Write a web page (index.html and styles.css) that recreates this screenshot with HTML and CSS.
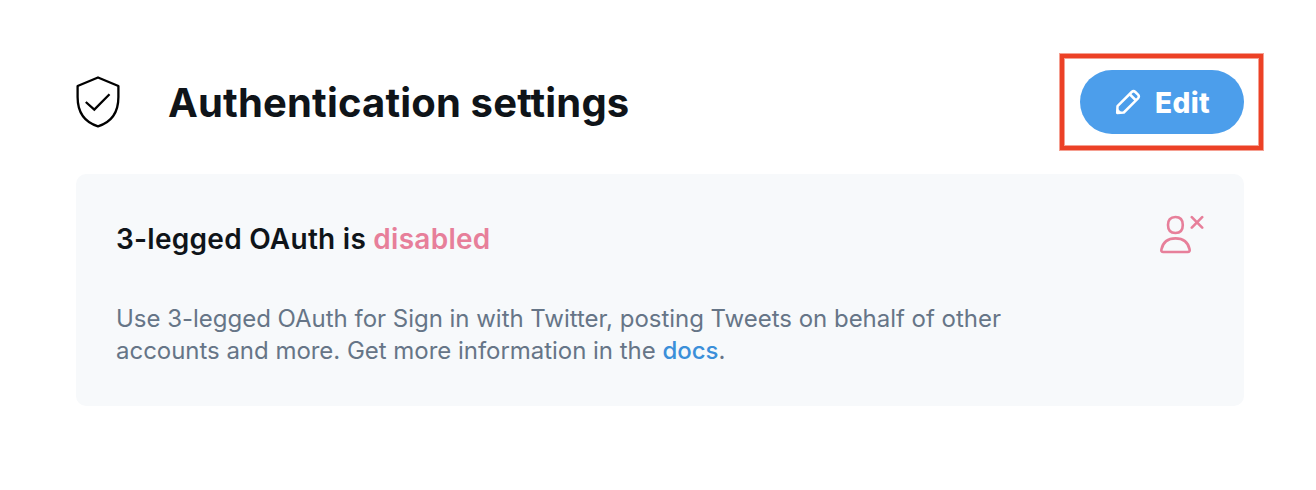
FILE: index.html
```html
<!DOCTYPE html>
<html lang="en">
<head>
<meta charset="utf-8">
<title>Authentication settings</title>
<link rel="stylesheet" href="styles.css">
</head>
<body>
<main class="page">
  <header class="header">
    <svg class="shield" viewBox="0 0 44 54" fill="none" stroke="#000" stroke-width="2.3" stroke-linejoin="round">
      <path d="M22 2.500 L42.400 11 V22 C42.400 38 34.500 47.500 22 51.300 C9.500 47.500 1.600 38 1.600 22 V11 Z"/>
      <path d="M9.800 27 L18.300 34.600 L33.500 19.300" stroke-linejoin="miter"/>
    </svg>
    <h1 class="title">Authentication settings</h1>
    <div class="highlight">
      <button class="edit" type="button">
        <svg class="pencil" viewBox="0 0 26 26" fill="none" stroke="#fff" stroke-width="2.5" stroke-linejoin="round">
          <path d="M2.200 24 L2.500 17.200 L16.700 3 Q18.500 1.300 20.300 3 L23 5.700 Q24.700 7.500 23 9.300 L8.800 23.500 Z"/>
          <path d="M15 5.500 L20.500 11"/>
          <path d="M2.500 20 L6 23.500 L2.200 24 Z" fill="#fff" stroke-width="1"/>
        </svg>
        <span class="edit-label">Edit</span>
      </button>
    </div>
  </header>
  <section class="card">
    <div class="card-head">
      <h2 class="card-title">3-legged OAuth is <span class="disabled">disabled</span></h2>
      <svg class="user" viewBox="0 0 46 40" fill="none" stroke="#e77f9a" stroke-width="2.6" stroke-linecap="round" stroke-linejoin="round">
        <path d="M17.400 3 C22.500 3 24.800 6.200 24.800 11 C24.800 16.500 22.800 19 17.400 19 C12 19 10 16.500 10 11 C10 6.200 12.300 3 17.400 3 Z"/>
        <path d="M5.300 38 H29.700 Q32.200 38 31.600 35.400 C30 28 24.500 24.400 17.500 24.400 C10.500 24.400 5 28 3.400 35.400 Q2.800 38 5.300 38 Z"/>
        <path d="M33.800 3.200 L44.200 13.700 M44.200 3.200 L33.800 13.700"/>
      </svg>
    </div>
    <p class="copy"><span class="line">Use 3-legged OAuth for Sign in with Twitter, posting Tweets on behalf of other</span> <span class="line second">accounts and more. Get more information in the <a class="docs">docs</a>.</span></p>
  </section>
</main>
</body>
</html>
```
FILE: styles.css
```css
body { margin: 0; background: #fff; font-family: Inter, sans-serif; color: #0f1419; }
.page { padding: 54px 53px 0 76px; }
.header { display: flex; height: 96px; }
.shield { width: 44px; height: 54px; margin-top: 21px; }
.title { margin: 24px 0 0 48px; font-size: 40px; line-height: 50px; font-weight: 700; letter-spacing: 0.16px; white-space: nowrap; }
.highlight { box-sizing: border-box; width: 203px; height: 96px; margin-left: auto; border: 4px solid #ec4126; box-shadow: 0 0 0 1px rgba(236, 65, 38, 0.5), inset 0 0 0 1px rgba(236, 65, 38, 0.5); padding: 12px 15px 12px 16px; }
.edit { display: flex; align-items: center; width: 164px; height: 64px; border: 0; border-radius: 32px; padding: 0 0 0 35px; background: #4c9eeb; color: #fff; font-family: inherit; }
.pencil { width: 26px; height: 26px; }
.edit-label { margin: 2px 0 0 14px; font-size: 28px; line-height: 36px; font-weight: 800; letter-spacing: 0.4px; }
.card { box-sizing: border-box; width: 1168px; height: 232px; margin-top: 24px; border-radius: 10px; padding: 40px; background: #f7f9fb; }
.card-head { display: flex; justify-content: space-between; height: 50px; }
.card-title { margin: 7px 0 0; font-size: 28px; line-height: 36px; font-weight: 600; letter-spacing: 0.26px; white-space: nowrap; }
.disabled { color: #e77f9a; }
.user { width: 46px; height: 40px; }
.copy { margin: 39px 0 0; font-size: 24px; line-height: 32px; letter-spacing: -0.02px; color: #667587; }
.line { display: block; width: max-content; white-space: nowrap; }
.second { letter-spacing: -0.03px; }
.docs { color: #3b8fd9; font-weight: 500; }
```
